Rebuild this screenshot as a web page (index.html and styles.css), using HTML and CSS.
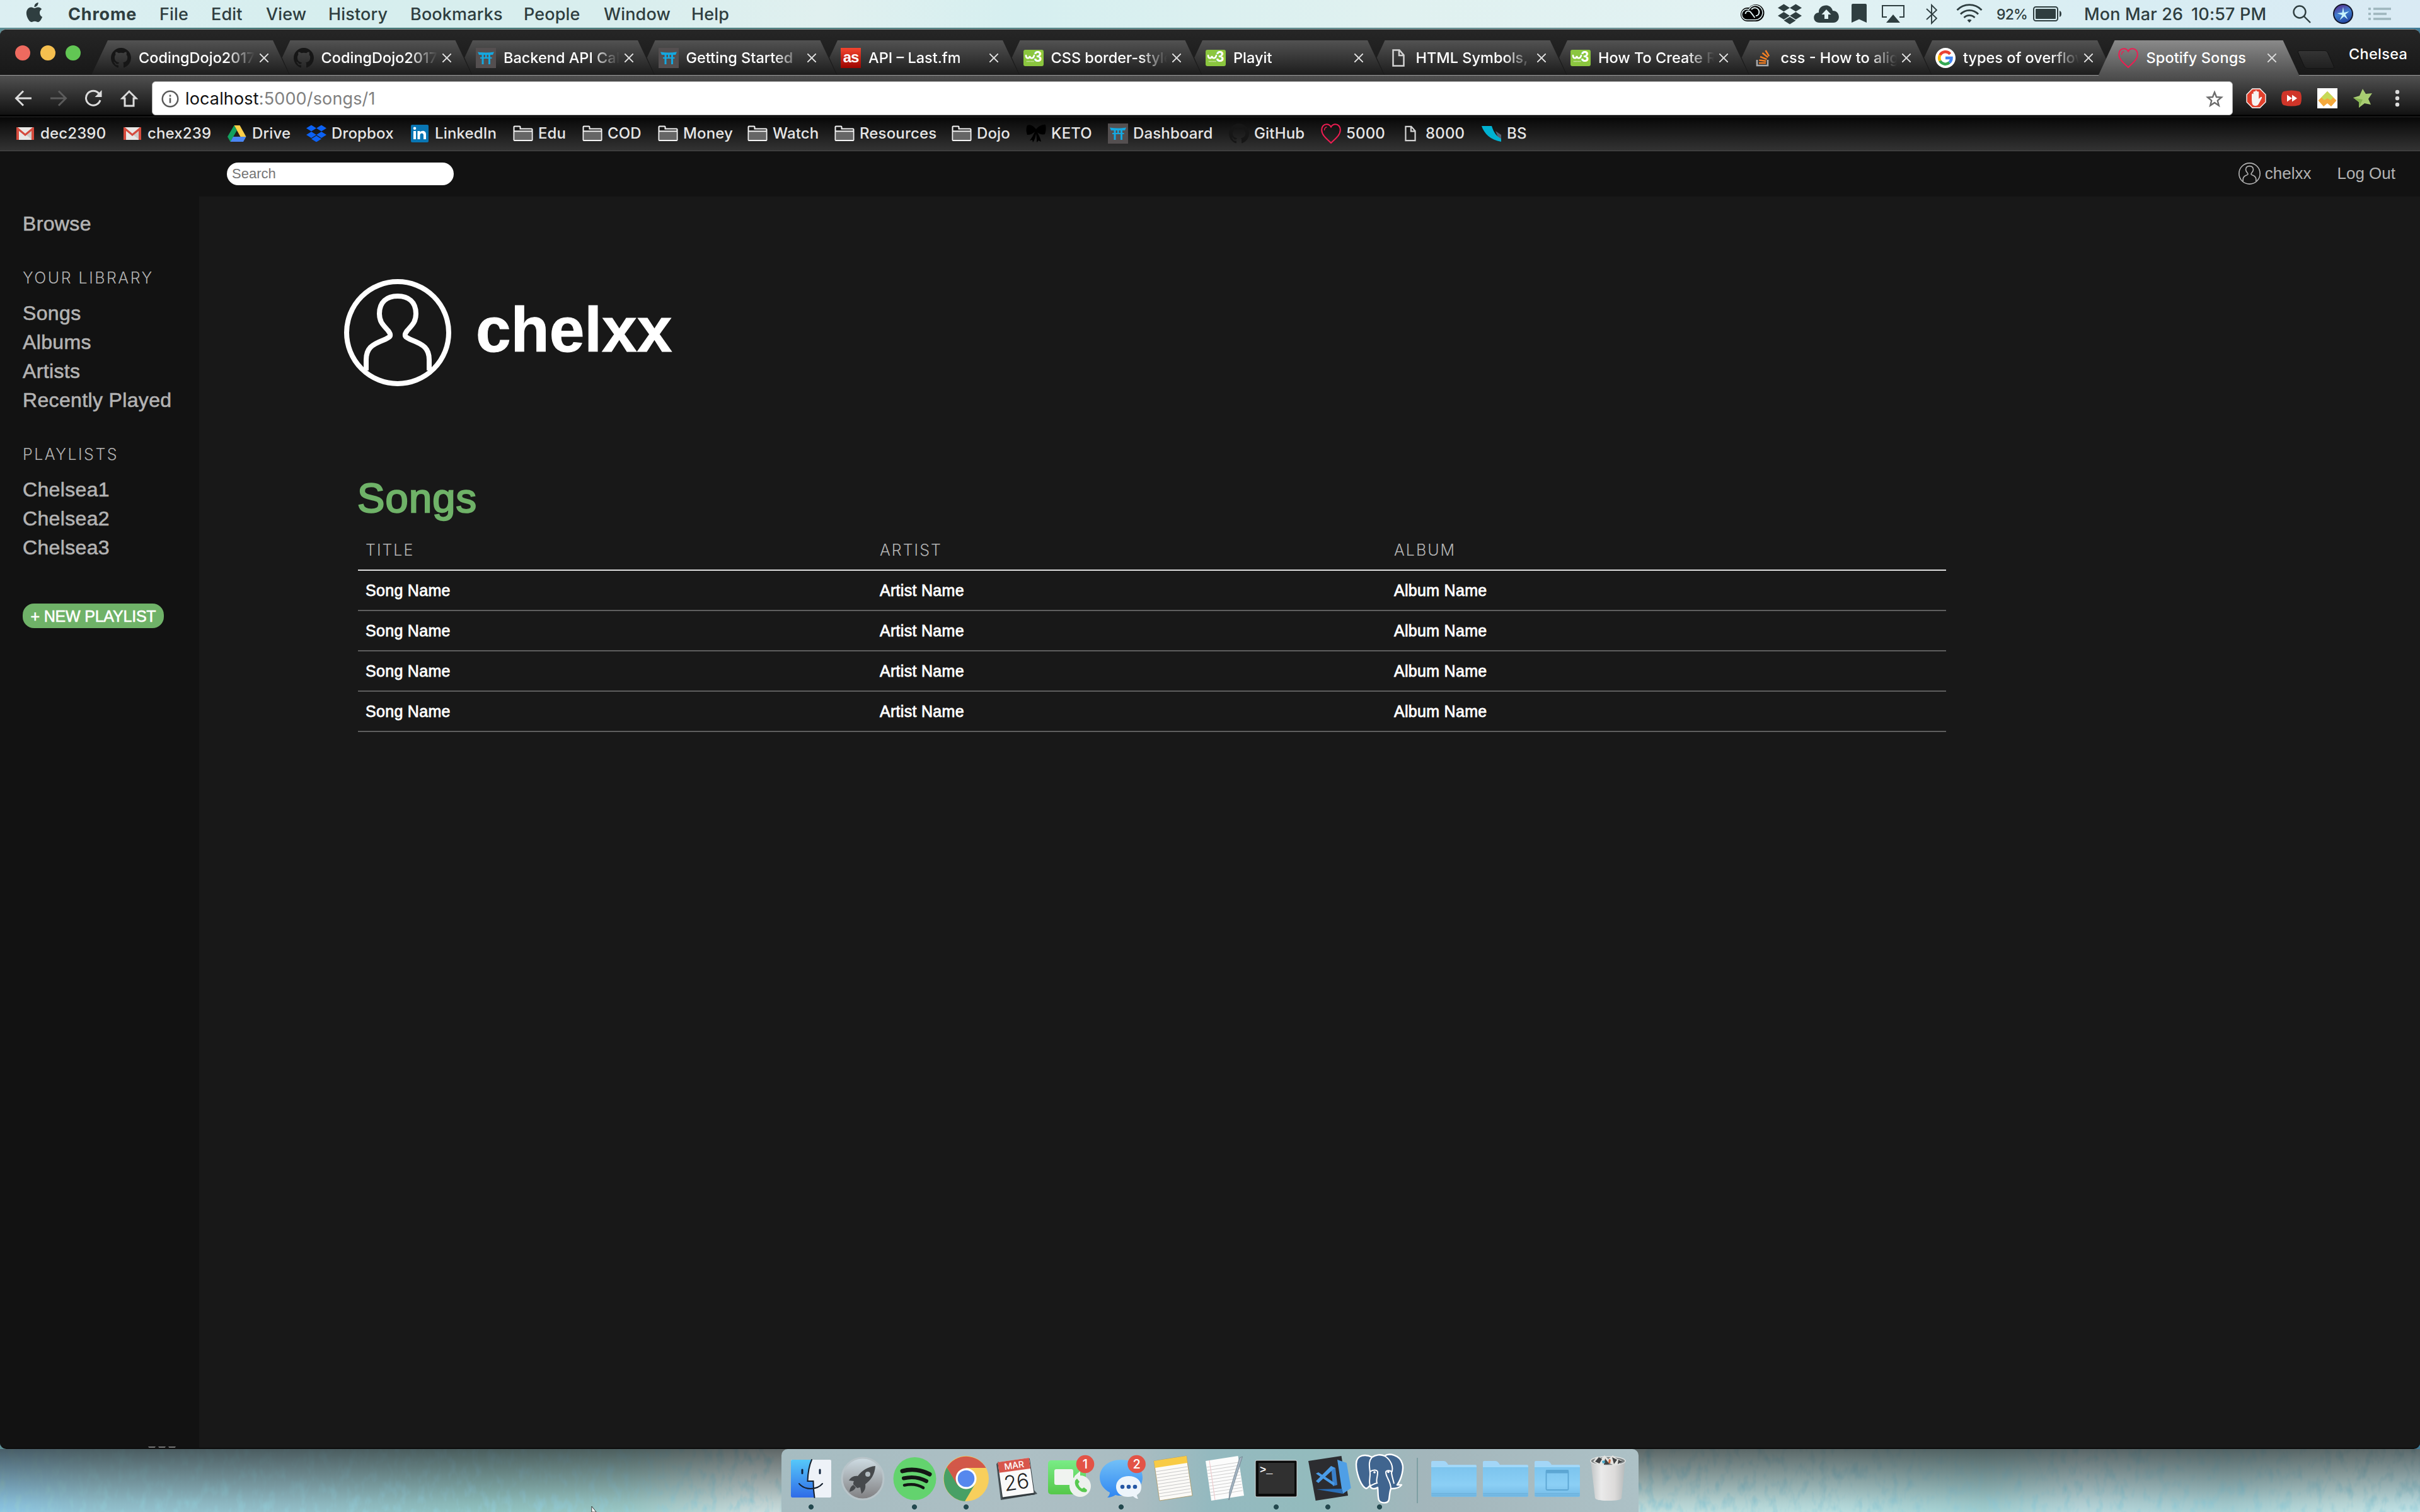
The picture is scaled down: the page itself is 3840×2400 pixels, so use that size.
FILE: index.html
```html
<!DOCTYPE html>
<html lang="en">
<head>
<meta charset="utf-8">
<title>Spotify Songs</title>
<link rel="stylesheet" href="styles.css">
</head>
<body>

<svg class="defs" aria-hidden="true">
  <defs>
    <linearGradient id="gLastfm" x1="0" y1="0" x2="0" y2="1"><stop offset="0" stop-color="#f5452f"/><stop offset="1" stop-color="#9c0500"/></linearGradient>
    <linearGradient id="gFolder" x1="0" y1="0" x2="0" y2="1"><stop offset="0" stop-color="#7cc4ee"/><stop offset=".6" stop-color="#8bcff5"/><stop offset="1" stop-color="#74bae6"/></linearGradient>
  </defs>
  <symbol id="github" viewBox="0 0 16 16"><path d="M8 0C3.58 0 0 3.58 0 8c0 3.54 2.29 6.53 5.47 7.59.4.07.55-.17.55-.38 0-.19-.01-.82-.01-1.49-2.01.37-2.53-.49-2.69-.94-.09-.23-.48-.94-.82-1.13-.28-.15-.68-.52-.01-.53.63-.01 1.08.58 1.23.82.72 1.21 1.87.87 2.33.66.07-.52.28-.87.51-1.07-1.78-.2-3.64-.89-3.64-3.95 0-.87.31-1.59.82-2.15-.08-.2-.36-1.02.08-2.12 0 0 .67-.21 2.2.82.64-.18 1.32-.27 2-.27s1.36.09 2 .27c1.53-1.04 2.2-.82 2.2-.82.44 1.1.16 1.92.08 2.12.51.56.82 1.27.82 2.15 0 3.07-1.87 3.75-3.65 3.95.29.25.54.73.54 1.48 0 1.07-.01 1.93-.01 2.2 0 .21.15.46.55.38A8.01 8.01 0 0 0 16 8c0-4.42-3.58-8-8-8z" fill="#161616"/></symbol>
  <symbol id="dojo" viewBox="0 0 32 32"><path d="M0 0h32v32H0z" fill="#544f50"/><path d="M3 6.500q13 2 26 0L27 11H5zM9.500 11h3v15h-3zM20 11h3v15h-3zM7 15h18.500v2H7zM15 11h2.500v5H15z" fill="#14a8e0"/></symbol>
  <symbol id="page" viewBox="0 0 32 32"><path d="M7.500 3.500h10l7 8v17h-17zM17 4v8h7.500" fill="none" stroke="#d2d2d2" stroke-width="2.500"/></symbol>
  <symbol id="stack" viewBox="0 0 32 32"><path d="M6 19v9h17v-9" fill="none" stroke="#a9abae" stroke-width="2.600"/><path d="M9 24h11M9.300 19.500l11 1.400M11 14l10.500 4.200M14.500 8l8.800 7M19.500 4l5.600 9.200" stroke="#f48024" stroke-width="2.500"/></symbol>
  <symbol id="google" viewBox="0 0 32 32"><circle cx="16" cy="16" r="16" fill="#fff"/><g fill="none" stroke-width="4.500"><path d="M23.500 9.800A9.800 9.800 0 0 0 7.300 11.500" stroke="#ea4335"/><path d="M7.300 11.500a9.800 9.800 0 0 0 0 9" stroke="#fbbc05"/><path d="M7.300 20.500a9.800 9.800 0 0 0 15 2.800" stroke="#34a853"/><path d="M22.300 23.300a9.500 9.500 0 0 0 3.200-7.300H16" stroke="#4285f4"/></g></symbol>
  <symbol id="heart" viewBox="0 0 32 32"><path d="M16 31C10 25 1.200 19 1.200 10 1.200 5 4.500 1.200 9 1.200c3 0 5.500 1.500 7 4.300 1.500-2.800 4-4.300 7-4.300 4.500 0 7.800 3.800 7.800 8.800C30.800 19 22 25 16 31z" fill="none" stroke="#ee1d52" stroke-width="2"/><path d="M5.500 11c0-3 1.500-5 4-5.500" fill="none" stroke="#ee1d52" stroke-width="1.300"/></symbol>
  <symbol id="gmail" viewBox="0 0 32 32"><path d="M2 6h28v20H2z" fill="#e9e8e6"/><path d="M16 17l11 9h3V8z" fill="#cfcdca"/><path d="M2 26V7.500l4 2V26zM30 26V7.500l-4 2V26z" fill="#d54b3d"/><path d="M2 8.500V6h2l12 10L28 6h2v2.500L16 20z" fill="#d54b3d"/></symbol>
  <symbol id="drive" viewBox="0 0 32 32"><path d="M11.500 3h9l10 18h-9z" fill="#ffcf48"/><path d="M11.500 3L1 21l4.500 8L16 11z" fill="#12a15f"/><path d="M10 21h20.500L26 29H5.500z" fill="#4a86f3"/></symbol>
  <symbol id="dropbox" viewBox="0 0 32 27"><path d="M8 0l8 5-8 5-8-5zM24 0l8 5-8 5-8-5zM8 10.600l8 5-8 5-8-5zM24 10.600l8 5-8 5-8-5zM16 17l8 5-8 5-8-5z"/></symbol>
  <symbol id="linkedin" viewBox="0 0 32 32"><rect x="2" y="2" width="28" height="28" rx="2" fill="#0976b4"/><path d="M6 12h4v13H6zM12.500 12h4v1.800c2-3 9.500-3.200 9.500 3.700V25h-4v-6.500c0-4-5.500-4-5.500 0V25h-4z" fill="#fff"/><circle cx="8" cy="7.700" r="2.300" fill="#fff"/></symbol>
  <symbol id="folder" viewBox="0 0 32 32"><path d="M1.500 26V5.500q0-1 1-1h8q1 0 1 1V8.500h18q1 0 1 1V26q0 1-1 1h-27q-1 0-1-1z" fill="#1b1b1b"/><path d="M3 13h26v13H3z" fill="#666"/><path d="M1.500 26V5.500q0-1 1-1h8q1 0 1 1V8.500h18q1 0 1 1V26q0 1-1 1h-27q-1 0-1-1zM2 12.200h28" fill="none" stroke="#f4f4f4" stroke-width="2"/></symbol>
  <symbol id="bow" viewBox="0 0 32 32"><path d="M16 9C12 4 6 1 2 3c-2 4-2 10 0 15 5 0 9-2 12-5-2 5-5 10-8 14l4-1 1 4c3-4 4-9 5-14 1 5 1 9 1 14l3-3 4 2c-1-6-4-11-6-15 3 3 8 4 12 3 2-5 2-11 1-15C27 1 20 4 16 9z" fill="#000"/></symbol>
  <symbol id="bs" viewBox="0 0 32 32"><path d="M22 12l9 6v9l-4-3z" fill="#5a6070"/><path d="M0 4h16c3 10 8 17 15 20v5C14 26 4 16 0 4z" fill="#00b2d2"/></symbol>
  <symbol id="person" viewBox="0 0 170 170"><g fill="none" stroke="currentColor" stroke-width="8"><circle cx="85" cy="85" r="81"/><path d="M35 145V128C35 110 44 104 62 97 74 92 76 90 70 82 62 73 56 68 56 55 56 36 68 27 85 27s29 9 29 28c0 13-6 18-14 27-6 8-4 10 8 15 18 7 27 13 27 31v17"/></g></symbol>
  <symbol id="dockfolder" viewBox="0 0 82 100"><path d="M5 30V21q0-2 2-2h18q3 0 5 3l2 3h43q2 0 2 2v6z" fill="#a3d6f7"/><path d="M5 28h72v46q0 2-2 2H7q-2 0-2-2z" fill="url(#gFolder)"/><path d="M5 28h72" stroke="#a5dbfa" stroke-width="1.500"/><path d="M5.500 70.500h71M5.500 73h71" stroke="#69add8" stroke-width="1"/></symbol>
</svg>

<header class="menubar">
  <nav class="menus">
    <svg class="apple" viewBox="0 0 24 24"><path d="M12.152 6.896c-.948 0-2.415-1.078-3.960-1.040-2.040.027-3.910 1.183-4.961 3.014-2.117 3.675-.546 9.103 1.519 12.090 1.013 1.454 2.208 3.090 3.792 3.039 1.520-.065 2.090-.987 3.935-.987 1.831 0 2.350.987 3.960.948 1.637-.026 2.676-1.480 3.676-2.948 1.156-1.688 1.636-3.325 1.662-3.415-.039-.013-3.182-1.221-3.220-4.857-.026-3.040 2.480-4.494 2.597-4.559-1.429-2.090-3.623-2.324-4.390-2.376-2-.156-3.675 1.090-4.610 1.090zM15.530 3.830c.843-1.012 1.400-2.427 1.245-3.830-1.207.052-2.662.805-3.532 1.818-.78.896-1.454 2.338-1.273 3.714 1.338.104 2.715-.688 3.559-1.701"/></svg>
    <b>Chrome</b><span>File</span><span>Edit</span><span>View</span><span>History</span><span>Bookmarks</span><span>People</span><span>Window</span><span>Help</span>
  </nav>
  <div class="status">
    <svg viewBox="0 0 40 44" width="40"><g fill="#000"><rect x="1" y="12" width="30" height="22" rx="11"/><circle cx="25" cy="20.500" r="13.500"/></g><g fill="none" stroke="#dff0f1" stroke-width="1.500"><path d="M25 31.500H12a8.500 8.500 0 1 1 2-16.500A11.500 11.500 0 1 1 25 31.500"/><path d="M8.500 22c1-6 7-5 9-2l6 8M18 15c4-4 9-3 11 0 3 4 1 10-4 10" stroke-width="2"/></g></svg>
    <svg viewBox="0 0 38 44" width="38"><use href="#dropbox" y="6" width="38" height="33"/></svg>
    <svg viewBox="0 0 40 44" width="40"><path d="M9 36C-3 36-2 20 8 20 7 7 27 4 30 17c13 0 13 19 1 19z"/><path d="M20 15l7.500 8H23v7h-6v-7h-4.500z" fill="#e2f2f3"/></svg>
    <svg viewBox="0 0 24 44" width="24"><path d="M2 6h20q2 0 2 2v28l-12-5.500L0 36V8q0-2 2-2z"/></svg>
    <svg viewBox="0 0 36 44" width="36"><path d="M8 27H1V9h34v18h-7" fill="none" stroke="#2f3e40" stroke-width="2"/><path d="M18 23l11 13H7z"/></svg>
    <svg viewBox="0 0 18 44" width="18"><path d="M1 14l16 15-8 8V8l8 8L1 31" fill="none" stroke="#2f3e40" stroke-width="1.900"/></svg>
    <svg viewBox="0 0 42 44" width="42"><g fill="none" stroke="#2f3e40" stroke-width="2.800"><path d="M1.500 16a27 27 0 0 1 39 0M7 22.500a19 19 0 0 1 28 0M12.500 28a12 12 0 0 1 17 0"/></g><path d="M17.500 32a5 4 0 0 1 7 0L21 36z"/></svg>
    <span class="pct">92%</span>
    <svg viewBox="0 0 48 44" width="48"><rect x="1" y="11" width="38" height="22" rx="3.500" fill="none" stroke="#2f3e40" stroke-width="2"/><rect x="4" y="14" width="32" height="16" rx="1"/><path d="M42 17c4 1 4 9 0 10z"/></svg>
    <span>Mon Mar 26</span><span>10:57 PM</span>
    <svg viewBox="0 0 30 44" width="30"><g fill="none" stroke="#2f3e40" stroke-width="2.400"><circle cx="11" cy="19" r="9.500"/><path d="M18 26l10 10"/></g></svg>
    <svg viewBox="0 0 32 44" width="32"><defs><linearGradient id="siri" x1=".3" y1="0" x2=".7" y2="1"><stop offset="0" stop-color="#5b2f8f"/><stop offset=".45" stop-color="#3f7fd0"/><stop offset="1" stop-color="#1f3f9a"/></linearGradient></defs><circle cx="16" cy="22" r="15" fill="url(#siri)" stroke="#14172a" stroke-width="2"/><path d="M16 11l1.500 9 8-2-6 5 4 8-6-5-7 6 4-8-8-3 8-1z" fill="#c9f3fb"/></svg>
    <svg viewBox="0 0 36 44" width="36"><path d="M0 14h4M8 14h28M0 22h4M8 22h21M0 30h4M8 30h28" stroke="#9eb6bd" stroke-width="3.600"/></svg>
  </div>
</header>

<main class="window">
  <div class="tabstrip">
    <div class="lights"><i class="red"></i><i class="yellow"></i><i class="green"></i></div>
    <div class="tabs">
      <div class="tab first"><svg><use href="#github"/></svg><span>CodingDojo2017</span><i class="close"></i></div>
      <div class="tab"><svg><use href="#github"/></svg><span>CodingDojo2017</span><i class="close"></i></div>
      <div class="tab"><svg><use href="#dojo"/></svg><span>Backend API Cal</span><i class="close"></i></div>
      <div class="tab"><svg><use href="#dojo"/></svg><span>Getting Started</span><i class="close"></i></div>
      <div class="tab"><svg viewBox="0 0 32 32"><path d="M0 0h32v32H0z" fill="url(#gLastfm)"/><text x="16" y="23" class="logo-as">as</text></svg><span>API – Last.fm</span><i class="close"></i></div>
      <div class="tab"><svg viewBox="0 0 32 32"><rect y="3" width="32" height="26" rx="3" fill="#8bc63f"/><text x="23" y="22" class="logo-3">3</text><path d="M4 12c0 5 5 6 6 1 1 5 6 4 7-1" fill="none" stroke="#fff" stroke-width="2.600" stroke-linecap="round"/><path d="M5 21.500h12" stroke="#d9ecc0" stroke-width="1.500" stroke-dasharray="1.500 .8"/></svg><span>CSS border-style</span><i class="close"></i></div>
      <div class="tab"><svg viewBox="0 0 32 32"><rect y="3" width="32" height="26" rx="3" fill="#8bc63f"/><text x="23" y="22" class="logo-3">3</text><path d="M4 12c0 5 5 6 6 1 1 5 6 4 7-1" fill="none" stroke="#fff" stroke-width="2.600" stroke-linecap="round"/><path d="M5 21.500h12" stroke="#d9ecc0" stroke-width="1.500" stroke-dasharray="1.500 .8"/></svg><span>Playit</span><i class="close"></i></div>
      <div class="tab"><svg><use href="#page"/></svg><span>HTML Symbols,</span><i class="close"></i></div>
      <div class="tab"><svg viewBox="0 0 32 32"><rect y="3" width="32" height="26" rx="3" fill="#8bc63f"/><text x="23" y="22" class="logo-3">3</text><path d="M4 12c0 5 5 6 6 1 1 5 6 4 7-1" fill="none" stroke="#fff" stroke-width="2.600" stroke-linecap="round"/><path d="M5 21.500h12" stroke="#d9ecc0" stroke-width="1.500" stroke-dasharray="1.500 .8"/></svg><span>How To Create R</span><i class="close"></i></div>
      <div class="tab"><svg><use href="#stack"/></svg><span>css - How to alig</span><i class="close"></i></div>
      <div class="tab"><svg><use href="#google"/></svg><span>types of overflow</span><i class="close"></i></div>
      <div class="tab active"><svg><use href="#heart"/></svg><span>Spotify Songs</span><i class="close"></i></div>
    </div>
    <i class="newtab"></i>
    <span class="profile">Chelsea</span>
  </div>

  <div class="toolbar">
    <svg viewBox="0 0 28 28"><path d="M27 14H3M14 2.500L2.500 14 14 25.500" fill="none" stroke="#dcdcdc" stroke-width="3"/></svg>
    <svg viewBox="0 0 28 28"><path d="M1 14h24M14 2.500L25.500 14 14 25.500" fill="none" stroke="#5b5b5b" stroke-width="3"/></svg>
    <svg viewBox="0 0 28 28"><path d="M23 6.500A11.500 11.500 0 1 0 25 17" fill="none" stroke="#dcdcdc" stroke-width="3"/><path d="M27.500 1v11h-11z" fill="#dcdcdc"/></svg>
    <svg viewBox="0 0 28 28"><path d="M7 14v12h14V14h4L14 3 3 14z" fill="none" stroke="#dcdcdc" stroke-width="3"/></svg>
    <div class="omnibox">
      <svg class="info" viewBox="0 0 28 28"><circle cx="14" cy="14" r="12.300" fill="none" stroke="#5a5a5a" stroke-width="2.500"/><path d="M14 12.500v8M14 7.500v3" stroke="#5a5a5a" stroke-width="2.600"/></svg>
      <span class="host">localhost</span><span class="path">:5000/songs/1</span>
      <svg class="star" viewBox="0 0 28 28"><path d="M14 3.500l3 7.500 8 .5-6.200 5.200 2 7.800L14 20l-6.800 4.500 2-7.800L3 11.500l8-.5z" fill="none" stroke="#6b6b6b" stroke-width="2.400"/></svg>
    </div>
    <svg viewBox="0 0 32 32" class="ext"><path d="M10 1h12l9 9v12l-9 9H10l-9-9V10z" fill="#e2402c" stroke="#fff" stroke-width="1.300"/><path d="M9 19V9.500q1.300-2 2.600 0V6q1.400-2 2.800 0V4.500q1.500-2 3 0V6q1.400-2 2.800 0v11l3-3q2.200-.8 2 1.200L20 25q-1.500 3-5 3-4.500 0-5.500-4z" fill="#f6f3f1"/></svg>
    <svg viewBox="0 0 32 32" class="ext"><path d="M4 5q12-3 24 0 4 1 4 11t-4 11q-12 3-24 0-4-1-4-11T4 5z" fill="#cf3529"/><path d="M9 10.500l8 5.500-8 5.500zM17 10.500l8 5.500-8 5.500z" fill="#fff"/></svg>
    <svg viewBox="0 0 32 32" class="ext"><path d="M0 0h32v32H0z" fill="#fff"/><path d="M16 5L1.500 19.500 10 29l6-5 6 5 8.500-9.500z" fill="#f4a83c"/><path d="M16 5l9.500 9.500L21 19l-5-3-5 3-4.500-4.500z" fill="#c6da58"/></svg>
    <svg viewBox="0 0 32 32" class="ext"><path d="M15 1l5 8 10-1-6 9 4 9-10-2-9 7v-9L0 15l10-3z" fill="#a9cd72"/><path d="M9 31v-9L0 15l15 3z" fill="#86b353"/></svg>
    <svg viewBox="0 0 12 32" class="dots"><g fill="#dcdcdc"><circle cx="6" cy="6" r="3.200"/><circle cx="6" cy="16" r="3.200"/><circle cx="6" cy="26" r="3.200"/></g></svg>
  </div>

  <nav class="bookmarks">
    <a><svg><use href="#gmail"/></svg>dec2390</a>
    <a><svg><use href="#gmail"/></svg>chex239</a>
    <a><svg><use href="#drive"/></svg>Drive</a>
    <a><svg fill="#0c62f5"><use href="#dropbox" y="2.500" height="27"/></svg>Dropbox</a>
    <a><svg><use href="#linkedin"/></svg>LinkedIn</a>
    <a><svg><use href="#folder"/></svg>Edu</a>
    <a><svg><use href="#folder"/></svg>COD</a>
    <a><svg><use href="#folder"/></svg>Money</a>
    <a><svg><use href="#folder"/></svg>Watch</a>
    <a><svg><use href="#folder"/></svg>Resources</a>
    <a><svg><use href="#folder"/></svg>Dojo</a>
    <a><svg><use href="#bow"/></svg>KETO</a>
    <a><svg><use href="#dojo"/></svg>Dashboard</a>
    <a><svg><use href="#github"/></svg>GitHub</a>
    <a><svg><use href="#heart"/></svg>5000</a>
    <a><svg viewBox="-2 -2 36 36"><use href="#page" width="32" height="32"/></svg>8000</a>
    <a><svg><use href="#bs"/></svg>BS</a>
  </nav>

  <div class="app">
    <div class="topbar">
      <input class="search" type="text" placeholder="Search">
      <a class="user"><svg><use href="#person"/></svg>chelxx</a>
      <a>Log Out</a>
    </div>
    <div class="columns">
      <aside class="sidebar">
        <ul><li>Browse</li></ul>
        <h4>YOUR LIBRARY</h4>
        <ul><li>Songs</li><li>Albums</li><li>Artists</li><li>Recently Played</li></ul>
        <h4>PLAYLISTS</h4>
        <ul><li>Chelsea1</li><li>Chelsea2</li><li>Chelsea3</li></ul>
        <button class="new">+ NEW PLAYLIST</button>
      </aside>
      <section class="content">
        <div class="hero"><svg><use href="#person"/></svg><h1>chelxx</h1></div>
        <h2>Songs</h2>
        <div class="songs">
          <div class="row head"><span>TITLE</span><span>ARTIST</span><span>ALBUM</span></div>
          <div class="row"><span>Song Name</span><span>Artist Name</span><span>Album Name</span></div>
          <div class="row"><span>Song Name</span><span>Artist Name</span><span>Album Name</span></div>
          <div class="row"><span>Song Name</span><span>Artist Name</span><span>Album Name</span></div>
          <div class="row"><span>Song Name</span><span>Artist Name</span><span>Album Name</span></div>
        </div>
      </section>
    </div>
    <svg class="sliver" viewBox="0 0 44 3"><path d="M0 0h12l-2 3H2zM16 0h12l-2 3h-8zM32 0h12l-2 3h-8z" fill="#777"/></svg>
  </div>
</main>

<footer class="desktop">
  <svg class="grain" width="3840" height="100"><filter id="grain" x="0" y="0" width="1" height="1"><feTurbulence type="fractalNoise" baseFrequency=".08 .04" numOctaves="3" seed="4"/><feColorMatrix values="0 0 0 0 .3  0 0 0 0 .62  0 0 0 0 .7  0 2.200 0 0 -1.050"/></filter><rect width="3840" height="100" filter="url(#grain)"/></svg>
  <div class="shade"></div>
  <div class="dock">
    <svg class="on" viewBox="0 0 82 100"><defs><linearGradient id="fi" x1="0" y1="0" x2="0" y2="1"><stop offset="0" stop-color="#56c8f9"/><stop offset="1" stop-color="#2f6be8"/></linearGradient></defs><rect x="9" y="17" width="64" height="60" rx="2" fill="#eef2f8"/><path d="M11 17h31c-4 9-6 20-6.500 34h9c0 9 .5 17 2 26H11q-2 0-2-2V19q0-2 2-2z" fill="url(#fi)"/><path d="M27 33v5.500M55 33v5.500" stroke="#10233d" stroke-width="3" stroke-linecap="round"/><path d="M42 17c-4 9-6 20-6.500 34h9c0 9 .5 17 2 26M22 55c9 10.500 28 10.500 37 0" fill="none" stroke="#15202e" stroke-width="2" stroke-linecap="round"/></svg>
    <svg viewBox="0 0 82 100"><defs><linearGradient id="la" x1="0" y1="0" x2="0" y2="1"><stop offset="0" stop-color="#cfdde4"/><stop offset="1" stop-color="#7f7e80"/></linearGradient></defs><circle cx="41" cy="47" r="33" fill="url(#la)" stroke="#b8c4c9" stroke-width="3"/><path d="M61 27c-12 1-21 7-28 16-6-1-11 2-14 7l8 1c-1 2-1 3-1 5l6 6c2 0 3-1 5-1l2 10c5-4 7-9 6-15 9-7 15-15 16-29zM26 57c-4 2-6 7-6 11 4-1 8-3 10-7z" fill="#46494c"/><circle cx="49" cy="40" r="4" fill="#b2bbc0"/></svg>
    <svg class="on" viewBox="0 0 82 100"><circle cx="41.500" cy="47" r="34" fill="#63d36e"/><g fill="none" stroke="#131614" stroke-linecap="round"><path d="M22 35c14-4 30-2 43 5" stroke-width="7"/><path d="M24 46.500c12-3 25-1.500 36 4.500" stroke-width="6"/><path d="M25 57.500c11-2.500 21-1.500 30 4" stroke-width="4.600"/></g></svg>
    <svg class="on" viewBox="0 0 82 100"><circle cx="41" cy="47" r="36" fill="#f8cf5c"/><path d="M10.500 29A36 36 0 0 1 72.500 30H41a17 17 0 0 0-14 8z" fill="#d25849"/><path d="M10.500 29A36 36 0 0 0 39 83l16-27a17 17 0 0 1-28 0z" fill="#48a065"/><path d="M10.500 29L27 57l2-15 12-12z" fill="#d25849"/><circle cx="41" cy="47" r="16.500" fill="#fff"/><circle cx="41" cy="47" r="13.300" fill="#5688ee"/></svg>
    <svg viewBox="0 0 82 100"><path d="M7 24l3-4 52 40 10 11-3 1-55 9z" fill="#4a5459"/><g transform="rotate(-8 40 46)"><path d="M12 18h52v58H12z" fill="#333b3f"/><path d="M13 17h50v56H13z" fill="#fafafa"/><path d="M13 17h50v17H13z" fill="#d8564c"/><text x="38" y="30.500" class="cal-m">MAR</text><text x="38" y="64" class="cal-d">26</text></g></svg>
    <svg viewBox="0 0 82 100"><defs><linearGradient id="ft" x1="0" y1="0" x2="0" y2="1"><stop offset="0" stop-color="#79ec86"/><stop offset="1" stop-color="#55c84a"/></linearGradient></defs><rect x="7" y="18" width="60" height="54" rx="5" fill="url(#ft)"/><rect x="17" y="32" width="30" height="25" rx="3" fill="#f0f3f0"/><path d="M49 43l9-8v20l-9-8z" fill="#f0f3f0"/><circle cx="58" cy="59" r="17" fill="#edf1ee"/><path d="M50 50q-2 8 6 15 6 5 12 3l1-3-5-4-3 2q-5-3-6-8l2-3-4-5z" fill="#57c94f"/><circle cx="66" cy="24" r="14.300" fill="#e35346"/><text x="66" y="31" class="badge">1</text></svg>
    <svg class="on" viewBox="0 0 82 100"><defs><linearGradient id="ms" x1="0" y1="0" x2="0" y2="1"><stop offset="0" stop-color="#72c0f7"/><stop offset="1" stop-color="#2f86f2"/></linearGradient></defs><path d="M41 17c20 0 34 12 34 28S61 74 41 74c-3 0-6 0-9-1-3 2-8 4-13 4 3-3 4-5 4-8C13 64 7 55 7 45c0-16 14-28 34-28z" fill="url(#ms)"/><path d="M53 43c12 0 20 7 20 17 0 6-2 10-7 13 0 2 1 4 2 6-3 0-6-2-8-4-16 4-27-4-27-15 0-10 8-17 20-17z" fill="#eef5fb"/><g fill="#2557a4"><circle cx="43" cy="60" r="3.300"/><circle cx="53" cy="60" r="3.300"/><circle cx="63" cy="60" r="3.300"/></g><circle cx="65.600" cy="24" r="14.300" fill="#e35346"/><text x="65.600" y="31" class="badge">2</text></svg>
    <svg viewBox="0 0 82 100"><path d="M11 19l51.600-8L72 74l-52 8z" fill="#fbfaf7" stroke="#a8925a" stroke-width=".8"/><path d="M11 19l51.600-8 1.600 11L12.700 30z" fill="#f8cb45"/><path d="M13.500 36l51-8M14.300 41l51-8M15 46l51-8M15.700 51l51-8M16.400 56l51-8M17.100 61l51-8M17.800 66l51-8M18.500 71l51-8M19.200 76l51-8" stroke="#c9c9c9" stroke-width="1"/></svg>
    <svg viewBox="0 0 82 100"><path d="M11 19l51.500-8L72 74l-52 8z" fill="#fcfcfc"/><path d="M12.500 29l51-8M13.200 34l51-8M14 39l51-8M14.700 44l51-8M15.400 49l51-8M16 54l51-8M16.700 59l51-8M17.400 64l51-8M18 69l51-8M18.700 74l51-8" stroke="#cfcfcf" stroke-width="1"/><path d="M17 18l9 63" stroke="#eec5c8" stroke-width="1"/><path d="M69.500 12L52 68l-4 13 1-14L65 14z" fill="#a4b4c2" stroke="#6f7f8c" stroke-width=".8"/></svg>
    <svg class="on" viewBox="0 0 82 100"><rect x="8" y="18" width="66" height="58" rx="2" fill="#0a0a0a" stroke="#d5d8d9" stroke-width="1"/><path d="M13 22h57v49H13z" fill="#303030"/><text x="15" y="38" class="term">&gt;_</text></svg>
    <svg class="on" viewBox="0 0 82 100"><path d="M10 19l52.500-8L73 74l-51.400 8z" fill="#2c2c30"/><path d="M56 17l14.700 5 7 40L65 71l-2-8z" fill="#4f9fe6"/><path d="M23 64l40-1 2 8z" fill="#2a6fb8"/><path d="M46 27l7 3 3 27-7 2z" fill="#3a7fc9"/><path d="M46 27l6 3-26 24-4-3zM22 39l4-2 26 17-2 4z" fill="#4a9be6"/></svg>
    <svg class="on" viewBox="0 0 82 100"><path d="M29 13C20 8 4 8 4 24c0 13 6 31 13 37 4 4 6-1 9-3 1 6 8 6 12 3 1 7 0 14 2 20 3 6 15 6 16-1 1-6 1-12 3-17 5 0 14-1 17-6l-7 0c7-10 11-26 8-34C73 9 56 6 49 11c-6-3-14-2-20 2z" fill="#40658f" stroke="#fff" stroke-width="2.400" stroke-linejoin="round"/><path d="M29 13c-7 8-3 17-3 27 0 6-2 12 0 18M49 11c10 6 15 18 11 27 1 7 3 12 4 17M26 36c5-4 12-3 12 1 0 8-3 12-1 17-5 1-7 3-10 4M60 36c-3-3-9-2-9 1 0 8 8 14 8 26" fill="none" stroke="#fff" stroke-width="2"/><circle cx="33" cy="37" r="1.800" fill="#fff"/><circle cx="55" cy="36.500" r="1.800" fill="#fff"/></svg>
    <i class="divider"></i>
    <svg viewBox="0 0 82 100"><use href="#dockfolder"/></svg>
    <svg viewBox="0 0 82 100"><use href="#dockfolder"/></svg>
    <svg viewBox="0 0 82 100"><use href="#dockfolder"/><rect x="23.500" y="34" width="35" height="31" rx="1.500" fill="none" stroke="#5ca6d3" stroke-width="1.800"/><path d="M23 33.500h36v5H23z" fill="#5ca6d3"/></svg>
    <svg viewBox="0 0 82 100"><defs><linearGradient id="tr"><stop offset="0" stop-color="#c0c4c5"/><stop offset=".3" stop-color="#eaeaea"/><stop offset=".7" stop-color="#dcdad9"/><stop offset="1" stop-color="#b4b9ba"/></linearGradient></defs><path d="M12 18h55l-6 60q-1 4-20.500 4T19 78z" fill="url(#tr)"/><ellipse cx="39.500" cy="19" rx="27.500" ry="7" fill="#7d8384" stroke="#dfe2e2" stroke-width="1.500"/><path d="M16 20l6-8 7 3 5-5 6 6 7-6 6 5 8 3-3 6-9 2-8-4-8 4-9-1z" fill="#e3e3e0"/><path d="M19 20l6-7 5 3-4 7zM35 15l7 9-9 1zM46 13l8 4-5 7zM56 17l6 3-7 4z" fill="#3f4143"/><path d="M30 19l4-1 1 4-4 1z" fill="#47a8c9"/><path d="M41 16l3 1-1 6-3-1z" fill="#c9683f"/></svg>
  </div>
  <svg class="cursor" viewBox="0 0 10 10"><path d="M1 0l8 10H1z" fill="#fff" stroke="#222" stroke-width="1"/></svg>
</footer>
</body>
</html>
```
FILE: styles.css
```css
* { box-sizing: border-box; margin: 0; padding: 0; }

body {
  width: 3840px;
  height: 2400px;
  overflow: hidden;
  display: flex;
  flex-direction: column;
  background: linear-gradient(90deg, #5d8d93, #3c7472 12%, #548688 45%, #6b9396 70%, #4f8488 90%, #3f7b97);
  font-family: "Liberation Sans", Arial, sans-serif;
  color: #b3b3b3;
}
.defs { position: absolute; width: 0; height: 0; }
svg { display: block; flex: none; }
ul { list-style: none; }

/* macOS menu bar */
.menubar {
  height: 44px;
  flex: none;
  display: flex;
  justify-content: space-between;
  background: linear-gradient(90deg, #dceff2, #d6eeee 14%, #d9eeee 26%, #e0f0ef 34%, #d6eff0 42%, #e0f1f0 58%, #e2f2f3 74%, #d8edf3 88%, #d9eaf4);
  font: 500 27px/38px Inter, "Liberation Sans", sans-serif;
  letter-spacing: .15px;
  color: #2f3e40;
  fill: #2f3e40;
  white-space: pre;
}
.menubar svg { height: 44px; }
.menus { display: grid; margin-left: 39px; padding-top: 4px; grid-template-columns: 69px 145px 82px 87px 99px 130px 180px 127px 139px 100px; }
.menus .apple { width: 31px; height: 31px; }
.menus b { font-weight: 700; letter-spacing: .8px; }
.status { display: grid; grid-template-columns: 60px 57px 60px 48px 70px 48px 64px 58px 81px 170px 161px 64px 56px 82px; }
.status span { padding-top: 4px; }
.status .pct { font-size: 23px; letter-spacing: -.8px; }

/* Browser window */
.window {
  height: 2254px;
  margin-top: 2px;
  flex: none;
  display: flex;
  flex-direction: column;
  border-radius: 10px;
  overflow: hidden;
  background: #181818;
  border-top: 1px solid #8b8b8b;
  border-bottom: 2px solid #0c0c0c;
}
.tabstrip {
  height: 73px;
  flex: none;
  display: flex;
  padding-top: 17px;
  background: linear-gradient(#262626, #181818);
  border-bottom: 1px solid #9a9a9a;
  font: 500 23.500px/28px Inter, "Liberation Sans", sans-serif;
  letter-spacing: 0;
  color: #fff;
}
.lights { width: 145px; padding: 8px 0 0 24px; display: flex; gap: 16px; }
.lights i { width: 24px; height: 24px; border-radius: 50%; }
.red { background: #ee6a5f; }
.yellow { background: #f5bf4f; }
.green { background: #62c654; }
.tabs { display: flex; width: 3503px; }
.tab {
  width: 314px;
  height: 55px;
  margin-right: -24.5px;
  flex: none;
  display: flex;
  align-items: center;
  padding: 0 0 0 31px;
  background: linear-gradient(#525252, #3a3a3a 45%, #1c1c1c);
  clip-path: polygon(26px 0, 288px 0, 314px 100%, 25.500px 100%, 13.200px 50%);
}
.tab.first { clip-path: polygon(26px 0, 288px 0, 314px 100%, 0 100%); }
.tab.active {
  width: 320px;
  height: 56px;
  background: linear-gradient(#8a8a8a, #505050);
  clip-path: polygon(26px 0, 293px 0, 319px 100%, 0 100%);
}
.tab svg { width: 32px; height: 32px; }
.tab span { width: 184px; margin: 0 8px 0 12px; overflow: hidden; white-space: nowrap; mask-image: linear-gradient(90deg, #000 76%, transparent 100%); }
.tab.active span { margin-left: 13px; margin-right: 10px; mask-image: none; letter-spacing: .1px; }
.close {
  width: 14px;
  height: 14px;
  background:
    linear-gradient(45deg, transparent 45%, #d0d0d0 45%, #d0d0d0 55%, transparent 55%),
    linear-gradient(-45deg, transparent 45%, #d0d0d0 45%, #d0d0d0 55%, transparent 55%);
}
.tab.active .close { margin-left: -2px; }
.newtab { width: 48px; height: 29px; margin: 16px 0 0 3px; flex: none; transform: skewX(24deg); background: linear-gradient(#343434, #202020); border: 1px solid #141414; border-radius: 4px; }
.profile { margin-left: 28px; padding-top: 8px; letter-spacing: .3px; }
.logo-as { font: 700 24px "Liberation Sans", sans-serif; fill: #fff; text-anchor: middle; letter-spacing: -1px; }
.logo-3 { font: 700 23px "Liberation Sans", sans-serif; fill: #fff; text-anchor: middle; }

.toolbar {
  height: 66px;
  flex: none;
  display: grid;
  grid-template-columns: 56px 55px 57px 50px 3322px 56px 57px 57px 65px 12px;
  padding: 9px 0 0 23px;
  background: linear-gradient(#515151, #2e2e2e 50%, #121212 94%, #000 95%, #000 98%, #2c2c2c 98%);
}
.toolbar > svg { width: 28px; height: 28px; margin-top: 13px; }
.toolbar > .ext { width: 32px; height: 32px; margin: 11px 0 0 1px; }
.toolbar > .dots { width: 12px; height: 32px; margin-top: 11px; }
.omnibox {
  width: 3302px;
  height: 54px;
  display: flex;
  align-items: center;
  padding: 1px 14px 0;
  background: #fff;
  border: 1px solid #a8a8a8;
  border-radius: 6px;
  font: 400 27px/50px Inter, "Liberation Sans", sans-serif;
  letter-spacing: .15px;
}
.omnibox svg { width: 28px; height: 28px; }
.host { margin-left: 10px; color: #111; }
.path { color: #808080; }
.star { margin-left: auto; }

.bookmarks {
  height: 54px;
  flex: none;
  display: grid;
  grid-template-columns: 170px 166px 126px 164px 164px 110px 120px 142px 138px 186px 118px 130px 192px 146px 126px 129px auto;
  padding: 0 0 1px 24px;
  background: linear-gradient(#070707, #333);
  border-bottom: 1px solid #4c4c4c;
  font: 500 24px/50px Inter, "Liberation Sans", sans-serif;
  letter-spacing: .15px;
  color: #e6e6e6;
}
.bookmarks a { display: flex; align-items: center; gap: 8px; white-space: nowrap; }
.bookmarks svg { width: 32px; height: 32px; }

/* Web app */
.app { flex: 1; display: flex; flex-direction: column; position: relative; background: #121212; }
.topbar { height: 72px; flex: none; display: flex; align-items: center; padding: 0 39px 1px 360px; font-size: 26px; }
.search {
  width: 360px;
  height: 36px;
  margin: 0 auto 0 0;
  padding: 0 8px;
  border: 0;
  border-radius: 18px;
  background: #fff;
  font: 22px "Liberation Sans", Arial, sans-serif;
}
.search::placeholder { color: #757575; }
.user { display: flex; align-items: center; gap: 7px; margin-right: 41px; }
.user svg { width: 35px; height: 35px; }
.columns { flex: 1; display: flex; }
.sidebar { width: 316px; padding: 20px 0 0 36px; font-size: 32px; line-height: 46px; letter-spacing: .35px; }
.sidebar li { -webkit-text-stroke: .6px #b3b3b3; white-space: nowrap; }
.sidebar h4, .head span {
  font: 300 25px/30px Inter, "Liberation Sans", sans-serif;
  letter-spacing: 2.500px;
}
.sidebar h4 { margin: 48px 0 18px; }
.new {
  display: block;
  width: 224px;
  height: 39px;
  margin: 66px 0 0;
  border: 0;
  border-radius: 18px;
  background: #6fb268;
  color: #fff;
  font: 25px/36px "Liberation Sans", Arial, sans-serif;
  letter-spacing: -.2px;
  -webkit-text-stroke: .6px #fff;
}
.content { flex: 1; padding: 131px 0 0 230px; background: #181818; color: #fff; }
.hero { display: flex; height: 170px; }
.hero svg { width: 170px; height: 170px; }
.hero h1 { margin-left: 39px; font-size: 100px; line-height: 161px; -webkit-text-stroke: 1px #fff; }
.content h2 {
  margin: 142px 0 15px 21px;
  font-size: 65px;
  line-height: 72px;
  font-weight: 400;
  letter-spacing: 1.200px;
  color: #6fb268;
  -webkit-text-stroke: 2.400px #6fb268;
}
.songs { width: 2520px; margin-left: 22px; }
.row {
  height: 64px;
  display: grid;
  grid-template-columns: 816px 816px auto;
  padding-left: 12px;
  border-bottom: 2px solid #5e5e5e;
  font-size: 25px;
  line-height: 62px;
  letter-spacing: .3px;
  -webkit-text-stroke: .8px #fff;
}
.row.head { border-color: #dedede; color: #b3b3b3; -webkit-text-stroke: 0; }
.row.head span { line-height: 62px; letter-spacing: 2px; }
.sliver { position: absolute; left: 235px; bottom: -1px; width: 44px; height: 3px; }

/* Desktop strip and dock */
.desktop {
  height: 100px;
  flex: none;
  position: relative;
  display: flex;
  justify-content: center;
  background: linear-gradient(90deg, #8cc6e4, #93c2cf 4%, #93bfc9 12%, #90c2c0 20%, #9ac8c6 26%, #c8dcdc 31%, #c0dddc 68%, #b9dedf 76%, #9fcdcf 82%, #b9d8dc 86%, #a6cfd3 92%, #c0dfdf 97%, #bfe3e8);
}
.grain { position: absolute; inset: 0; }
.shade { position: absolute; inset: 0; background: linear-gradient(rgba(30, 30, 30, .62), rgba(40, 40, 40, .42) 35%, rgba(50, 50, 50, .08) 85%, transparent); }
.dock {
  position: relative;
  width: 1360px;
  display: flex;
  padding-left: 6px;
  border-radius: 10px 10px 0 0;
  background: linear-gradient(90deg, #a6bcc1, #adbfc4 28%, #a9bcc1 42%, #94b9bf 50%, #93bbbd 62%, #a3b6bb 75%, #adc1c6);
}
.dock svg { width: 82px; height: 100px; }
.dock .on { background: radial-gradient(circle at 41px 92px, #24494f 3.600px, transparent 4.400px); }
.divider { width: 2px; height: 72px; margin: 14px 16px 0 18px; background: #7e9fa3; }
.cursor { position: absolute; left: 938px; bottom: 0; width: 9px; height: 9px; }
.badge { font: 500 20px Inter, sans-serif; fill: #fff; text-anchor: middle; }
.cal-m { font: 500 14px Inter, sans-serif; fill: #fff; text-anchor: middle; }
.cal-d { font: 300 33px Inter, sans-serif; fill: #222; text-anchor: middle; }
.term { font: 700 17px "Liberation Mono", monospace; fill: #fff; }
```
